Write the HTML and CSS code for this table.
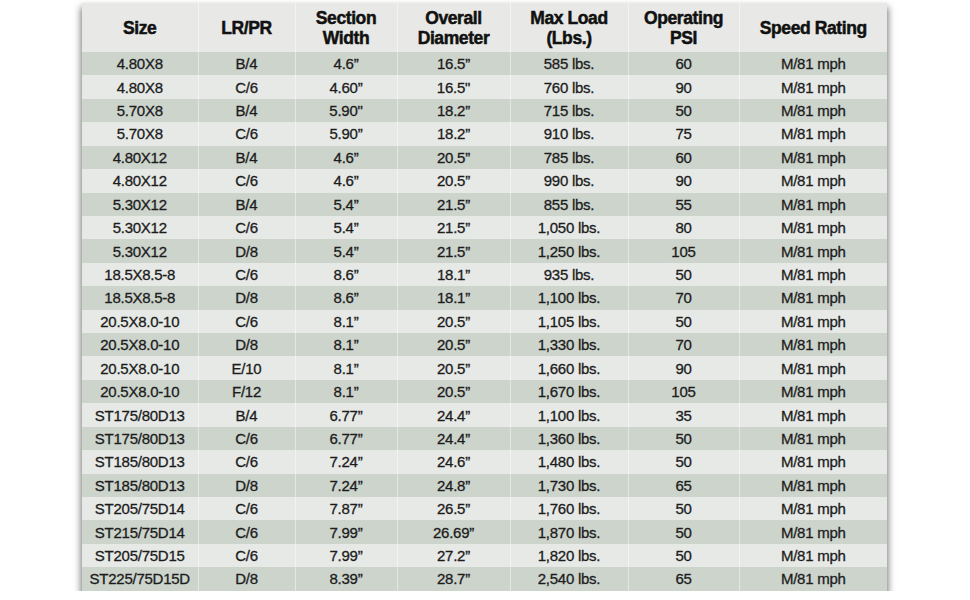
FILE: index.html
```html
<!DOCTYPE html>
<html>
<head>
<meta charset="utf-8">
<link rel="stylesheet" href="styles.css">
</head>
<body>
<div class="page">
<table class="specs">
<colgroup>
<col class="c1"><col class="c2"><col class="c3"><col class="c4"><col class="c5"><col class="c6"><col class="c7">
</colgroup>
<thead>
<tr><th>Size</th><th>LR/PR</th><th>Section<br>Width</th><th>Overall<br>Diameter</th><th>Max Load<br>(Lbs.)</th><th>Operating<br>PSI</th><th>Speed Rating</th></tr>
</thead>
<tbody>
<tr><td>4.80X8</td><td>B/4</td><td>4.6”</td><td>16.5”</td><td>585 lbs.</td><td>60</td><td>M/81 mph</td></tr>
<tr><td>4.80X8</td><td>C/6</td><td>4.60”</td><td>16.5"</td><td>760 lbs.</td><td>90</td><td>M/81 mph</td></tr>
<tr><td>5.70X8</td><td>B/4</td><td>5.90"</td><td>18.2”</td><td>715 lbs.</td><td>50</td><td>M/81 mph</td></tr>
<tr><td>5.70X8</td><td>C/6</td><td>5.90”</td><td>18.2”</td><td>910 lbs.</td><td>75</td><td>M/81 mph</td></tr>
<tr><td>4.80X12</td><td>B/4</td><td>4.6”</td><td>20.5”</td><td>785 lbs.</td><td>60</td><td>M/81 mph</td></tr>
<tr><td>4.80X12</td><td>C/6</td><td>4.6”</td><td>20.5”</td><td>990 lbs.</td><td>90</td><td>M/81 mph</td></tr>
<tr><td>5.30X12</td><td>B/4</td><td>5.4”</td><td>21.5”</td><td>855 lbs.</td><td>55</td><td>M/81 mph</td></tr>
<tr><td>5.30X12</td><td>C/6</td><td>5.4”</td><td>21.5”</td><td>1,050 lbs.</td><td>80</td><td>M/81 mph</td></tr>
<tr><td>5.30X12</td><td>D/8</td><td>5.4”</td><td>21.5”</td><td>1,250 lbs.</td><td>105</td><td>M/81 mph</td></tr>
<tr><td>18.5X8.5-8</td><td>C/6</td><td>8.6”</td><td>18.1”</td><td>935 lbs.</td><td>50</td><td>M/81 mph</td></tr>
<tr><td>18.5X8.5-8</td><td>D/8</td><td>8.6”</td><td>18.1”</td><td>1,100 lbs.</td><td>70</td><td>M/81 mph</td></tr>
<tr><td>20.5X8.0-10</td><td>C/6</td><td>8.1”</td><td>20.5”</td><td>1,105 lbs.</td><td>50</td><td>M/81 mph</td></tr>
<tr><td>20.5X8.0-10</td><td>D/8</td><td>8.1”</td><td>20.5”</td><td>1,330 lbs.</td><td>70</td><td>M/81 mph</td></tr>
<tr><td>20.5X8.0-10</td><td>E/10</td><td>8.1”</td><td>20.5”</td><td>1,660 lbs.</td><td>90</td><td>M/81 mph</td></tr>
<tr><td>20.5X8.0-10</td><td>F/12</td><td>8.1”</td><td>20.5”</td><td>1,670 lbs.</td><td>105</td><td>M/81 mph</td></tr>
<tr><td>ST175/80D13</td><td>B/4</td><td>6.77”</td><td>24.4”</td><td>1,100 lbs.</td><td>35</td><td>M/81 mph</td></tr>
<tr><td>ST175/80D13</td><td>C/6</td><td>6.77”</td><td>24.4”</td><td>1,360 lbs.</td><td>50</td><td>M/81 mph</td></tr>
<tr><td>ST185/80D13</td><td>C/6</td><td>7.24”</td><td>24.6”</td><td>1,480 lbs.</td><td>50</td><td>M/81 mph</td></tr>
<tr><td>ST185/80D13</td><td>D/8</td><td>7.24”</td><td>24.8”</td><td>1,730 lbs.</td><td>65</td><td>M/81 mph</td></tr>
<tr><td>ST205/75D14</td><td>C/6</td><td>7.87”</td><td>26.5”</td><td>1,760 lbs.</td><td>50</td><td>M/81 mph</td></tr>
<tr><td>ST215/75D14</td><td>C/6</td><td>7.99”</td><td>26.69”</td><td>1,870 lbs.</td><td>50</td><td>M/81 mph</td></tr>
<tr><td>ST205/75D15</td><td>C/6</td><td>7.99”</td><td>27.2”</td><td>1,820 lbs.</td><td>50</td><td>M/81 mph</td></tr>
<tr><td>ST225/75D15D</td><td>D/8</td><td>8.39”</td><td>28.7”</td><td>2,540 lbs.</td><td>65</td><td>M/81 mph</td></tr>
</tbody>
</table>
</div>
</body>
</html>
```

FILE: styles.css
```css
html, body {
  margin: 0;
  padding: 0;
  background: #ffffff;
}

.page {
  padding: 3px 0 0 82px;
}

.specs {
  width: 805px;
  table-layout: fixed;
  border-collapse: collapse;
  font-family: "Liberation Sans", Arial, sans-serif;
  box-shadow: 0 5px 7px 1px rgba(0, 0, 0, 0.55);
}

.c1 { width: 116px; }
.c2 { width: 97px; }
.c3 { width: 102px; }
.c4 { width: 113px; }
.c5 { width: 118px; }
.c6 { width: 111px; }
.c7 { width: 148px; }

.specs th,
.specs td {
  padding: 0;
  text-align: center;
  vertical-align: middle;
  white-space: nowrap;
  border-left: 1px solid rgba(255, 255, 255, 0.45);
}

.specs th:first-child,
.specs td:first-child {
  border-left: none;
}

.specs thead tr {
  height: 49px;
  background: #e8e9e7;
}

.specs th {
  font-size: 17.5px;
  line-height: 20px;
  font-weight: bold;
  color: #111111;
  letter-spacing: -0.4px;
  -webkit-text-stroke: 0.5px #111111;
}

.specs tbody tr {
  height: 23.43px;
}

.specs tbody tr:nth-child(odd) {
  background: #ccd4cc;
}

.specs tbody tr:nth-child(even) {
  background: #e6e9e6;
}

.specs td {
  font-size: 15px;
  line-height: 17px;
  color: #1c1c1c;
  letter-spacing: -0.25px;
  -webkit-text-stroke: 0.3px #1c1c1c;
}
```
